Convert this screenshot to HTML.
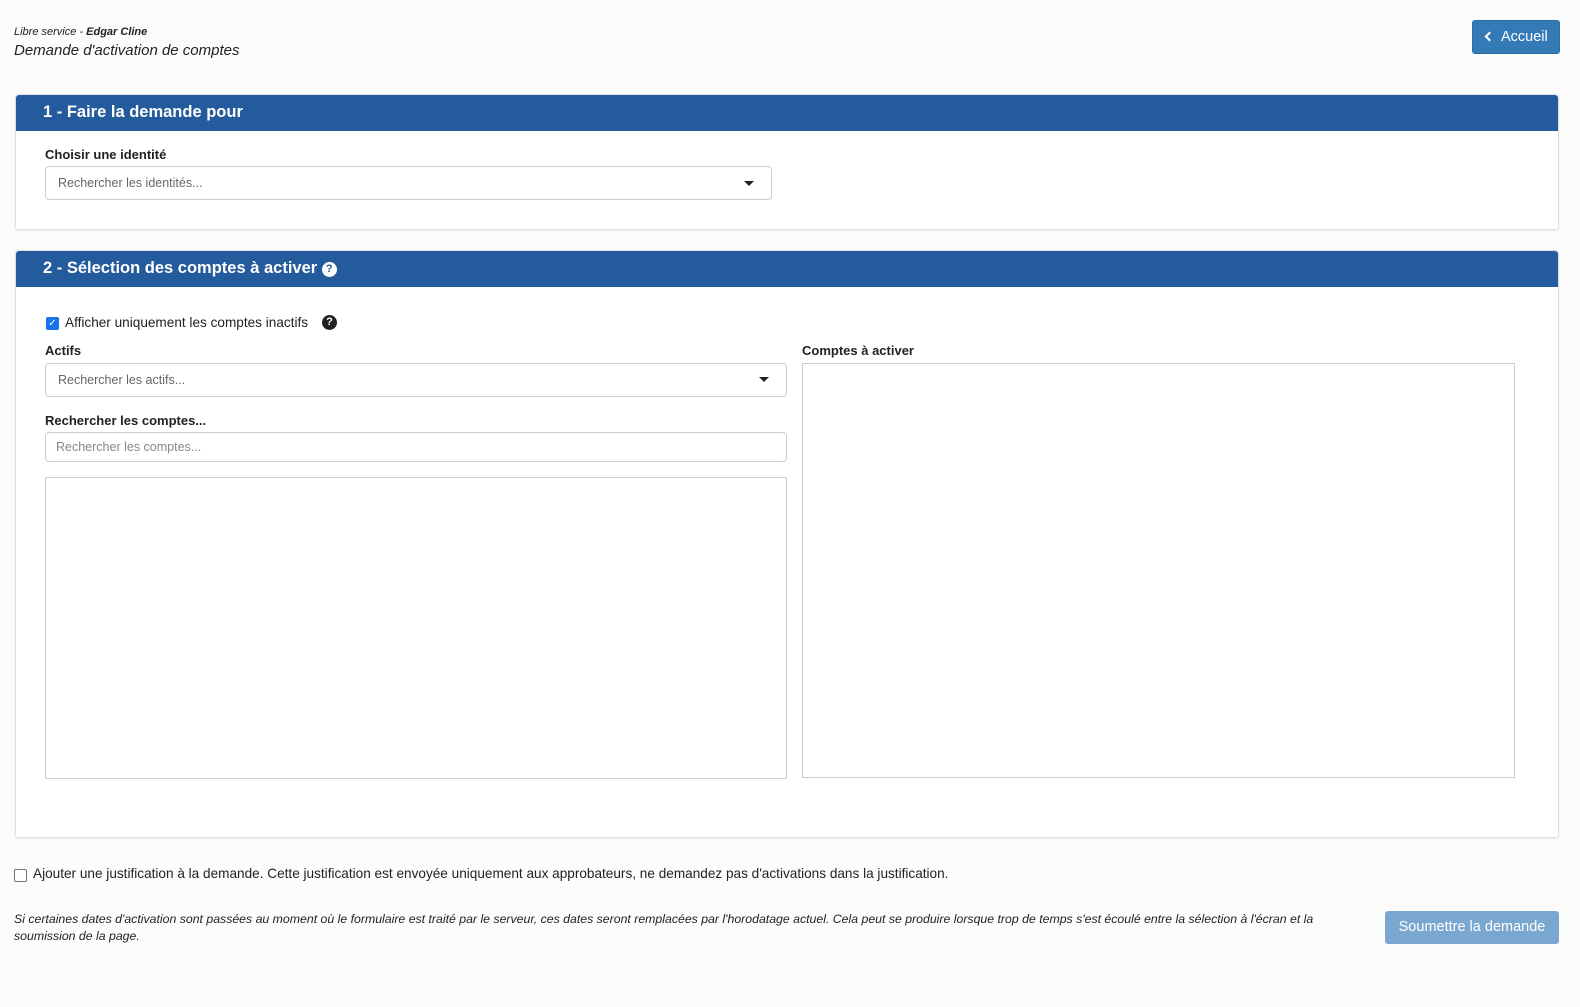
<!DOCTYPE html>
<html><head><meta charset="utf-8"><style>
*{box-sizing:border-box;margin:0;padding:0}
body{width:1580px;height:1007px;background:#fcfcfc;font-family:"Liberation Sans",sans-serif;color:#222;position:relative;overflow:hidden}
.abs{position:absolute}
.panel{position:absolute;left:15px;width:1544px;background:#fff;border:1px solid #e0e0e0;border-radius:3px;box-shadow:0 1px 2px rgba(0,0,0,.08)}
.ph{height:36px;background:#245b9c;color:#fff;font-size:16.5px;font-weight:bold;padding:8px 0 0 27px;border-radius:3px 3px 0 0}
.lbl{position:absolute;font-size:13px;font-weight:bold;color:#222}
.inp{position:absolute;border:1px solid #ccc;border-radius:4px;background:#fff;font-size:12.5px;color:#666;padding-left:12px}
.caret{position:absolute;width:0;height:0;border-left:5px solid transparent;border-right:5px solid transparent;border-top:5px solid #222}
.box{position:absolute;border:1px solid #ccc;background:#fff}
.q{display:inline-block;width:15px;height:15px;border-radius:50%;text-align:center;font-size:11px;font-weight:bold;line-height:15px;vertical-align:1px}
</style></head><body>
<div class="abs" style="left:14px;top:26px;font-size:11px;font-style:italic">Libre service - <b>Edgar Cline</b></div>
<div class="abs" style="left:14px;top:42px;font-size:15px;font-style:italic">Demande d'activation de comptes</div>
<div class="abs" style="left:1472px;top:20px;width:88px;height:34px;background:#337ab7;border:1px solid #2e6da4;border-radius:3px;color:#fff;font-size:14.5px;padding:8px 0 0 13px"><span style="display:inline-block;width:7px;height:7px;border-left:2px solid #fff;border-bottom:2px solid #fff;transform:rotate(45deg);margin-right:8px;position:relative;top:-1px"></span>Accueil</div>

<div class="panel" style="top:94px;height:136px">
<div class="ph">1 - Faire la demande pour</div>
<div class="lbl" style="left:29px;top:52px">Choisir une identité</div>
<div class="inp" style="left:29px;top:71px;width:727px;height:34px;padding-top:9px">Rechercher les identités...</div>
<div class="caret" style="left:728px;top:86px"></div>
</div>

<div class="panel" style="top:250px;height:588px">
<div class="ph">2 - Sélection des comptes à activer <span class="q" style="background:#fff;color:#245b9c">?</span></div>
<div class="abs" style="left:30px;top:66px;width:13px;height:13px;background:#1a73e8;border-radius:2px;color:#fff;font-size:10px;line-height:13px;text-align:center">✓</div>
<div class="abs" style="left:49px;top:64px;font-size:13.6px">Afficher uniquement les comptes inactifs</div>
<span class="q abs" style="left:306px;top:64px;background:#222;color:#fff">?</span>
<div class="lbl" style="left:29px;top:92px">Actifs</div>
<div class="inp" style="left:29px;top:112px;width:742px;height:34px;padding-top:9px">Rechercher les actifs...</div>
<div class="caret" style="left:743px;top:126px"></div>
<div class="lbl" style="left:29px;top:162px">Rechercher les comptes...</div>
<div class="inp" style="left:29px;top:181px;width:742px;height:30px;padding-left:10px;padding-top:7px;color:#888">Rechercher les comptes...</div>
<div class="box" style="left:29px;top:226px;width:742px;height:302px"></div>
<div class="lbl" style="left:786px;top:92px">Comptes à activer</div>
<div class="box" style="left:786px;top:112px;width:713px;height:415px"></div>
</div>

<div class="abs" style="left:14px;top:869px;width:13px;height:13px;border:1px solid #767676;border-radius:2px;background:#fff"></div>
<div class="abs" style="left:33px;top:866px;font-size:13.6px">Ajouter une justification à la demande. Cette justification est envoyée uniquement aux approbateurs, ne demandez pas d'activations dans la justification.</div>
<div class="abs" style="left:14px;top:911px;width:1330px;font-size:12.3px;font-style:italic;line-height:17px">Si certaines dates d'activation sont passées au moment où le formulaire est traité par le serveur, ces dates seront remplacées par l'horodatage actuel. Cela peut se produire lorsque trop de temps s'est écoulé entre la sélection à l'écran et la soumission de la page.</div>
<div class="abs" style="left:1385px;top:911px;width:174px;height:33px;background:#7aa7d0;border-radius:3px;color:#fff;font-size:14.5px;text-align:center;line-height:33px">Soumettre la demande</div>
</body></html>
